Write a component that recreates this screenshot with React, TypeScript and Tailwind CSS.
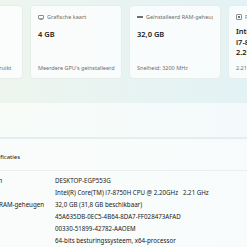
import type { ReactNode } from 'react'

interface SpecCardProps {
  icon?: ReactNode
  title: string
  value: ReactNode
  footer: string
  multiline?: boolean
}

function SpecCard({ icon, title, value, footer, multiline }: SpecCardProps) {
  return (
    <div className="w-[92px] h-[74px] shrink-0 rounded-[4px] bg-white/75 border border-[#e6eeea] px-[7px] pt-[7px] pb-[6px] flex flex-col overflow-hidden">
      <div className="flex items-center gap-[3px] h-[8px] whitespace-nowrap overflow-hidden text-[5.5px] text-[#6e6e6e]">
        {icon}
        <span>{title}</span>
      </div>
      <div
        className={
          multiline
            ? 'mt-[5px] text-[7.5px] leading-[10.5px] font-semibold text-[#1b1b1b] whitespace-nowrap'
            : 'mt-[8px] text-[7.5px] leading-[10px] font-semibold text-[#1b1b1b]'
        }
      >
        {value}
      </div>
      <div className="mt-auto text-[5.5px] leading-[8px] whitespace-nowrap text-[#6e6e6e]">{footer}</div>
    </div>
  )
}

function GpuIcon() {
  return (
    <svg width="6" height="5" viewBox="0 0 6 5" className="shrink-0">
      <rect x="0.5" y="0.5" width="5" height="3.2" rx="0.4" fill="none" stroke="#6e6e6e" strokeWidth="0.8" />
      <rect x="1.5" y="4.1" width="3" height="0.7" fill="#6e6e6e" />
    </svg>
  )
}

function RamIcon() {
  return (
    <svg width="6" height="4" viewBox="0 0 6 4" className="shrink-0">
      <rect x="0" y="1" width="6" height="2" rx="0.3" fill="#6e6e6e" />
    </svg>
  )
}

function CpuIcon() {
  return (
    <svg width="6" height="6" viewBox="0 0 6 6" className="shrink-0">
      <rect x="0.5" y="0.5" width="5" height="5" rx="0.6" fill="none" stroke="#6e6e6e" strokeWidth="0.8" />
      <rect x="2" y="2" width="2" height="2" fill="#6e6e6e" />
    </svg>
  )
}

const specs: [string, string][] = [
  ['Apparaatnaam', 'DESKTOP-EGP553G'],
  ['Processor', 'Intel(R) Core(TM) i7-8750H CPU @ 2.20GHz   2.21 GHz'],
  ['Geïnstalleerd RAM-geheugen', '32,0 GB (31,8 GB beschikbaar)'],
  ['Apparaat-id', '45A635DB-0EC5-4B64-8DA7-FF028473AFAD'],
  ['Product-id', '00330-51899-42782-AAOEM'],
  ['Systeemtype', '64-bits besturingssysteem, x64-processor'],
]

export default function App() {
  return (
    <div className="w-[247px] h-[247px] overflow-hidden bg-linear-to-r from-[#edf5ee] to-[#e3f2f5] font-['Noto_Sans',sans-serif]">
      {/* Spec cards */}
      <div className="flex gap-[7px] pt-[5px] ml-[-69px]">
        <SpecCard title="Opslag" value="477 GB" footer="218 GB van 477 GB gebruikt" />
        <SpecCard icon={<GpuIcon />} title="Grafische kaart" value="4 GB" footer="Meerdere GPU's geïnstalleerd" />
        <SpecCard icon={<RamIcon />} title="Geïnstalleerd RAM-geheugen" value="32,0 GB" footer="Snelheid: 3200 MHz" />
        <SpecCard
          icon={<CpuIcon />}
          title="Processor"
          value={
            <>
              <div>Intel(R) Core(TM)</div>
              <div>i7-8750H CPU @</div>
              <div>2.20GHz</div>
            </>
          }
          footer="2.21 GHz"
          multiline
        />
      </div>

      {/* Empty panel */}
      <div className="mt-[24px] h-[34px] bg-white/60" />
      <div className="h-[2px] bg-[#e2efef]" />

      {/* Device specifications */}
      <div className="bg-white/70 h-[120px]">
        <div className="ml-[-40px] pt-[13px] pb-[8px] text-[6px] leading-[10px] text-[#1b1b1b] whitespace-nowrap">
          Apparaatspecificaties
        </div>
        <div className="h-px bg-[#eaeeee]" />
        <div className="pt-[4px] ml-[-41px] flex flex-col">
          {specs.map(([label, value]) => (
            <div key={label} className="flex h-[12px] items-center text-[6.2px] text-[#1b1b1b] whitespace-nowrap">
              <span className="w-[96px] shrink-0">{label}</span>
              <span className="whitespace-pre">{value}</span>
            </div>
          ))}
        </div>
      </div>
    </div>
  )
}
